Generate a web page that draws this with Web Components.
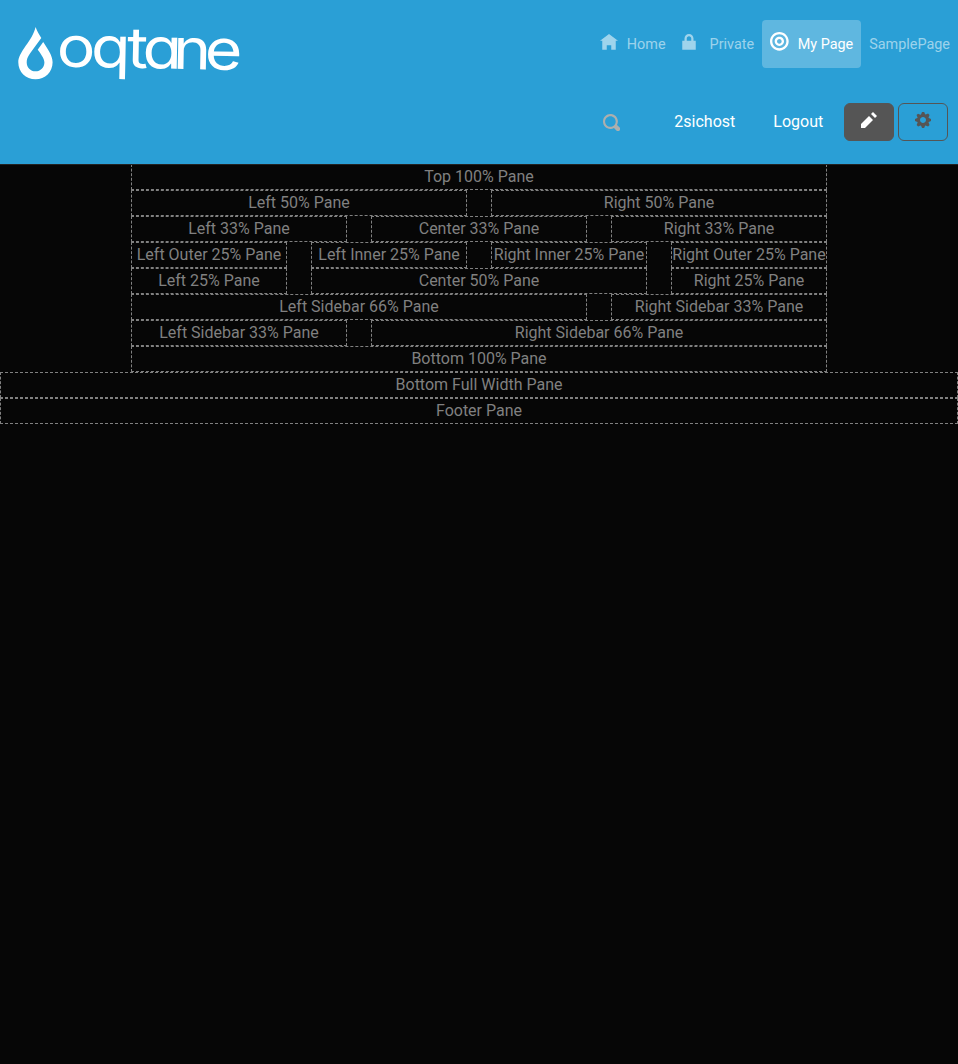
<!DOCTYPE html>
<html lang="en">
<head>
<meta charset="utf-8">
<title>My Page</title>
<style>
html{background:#060606}
body{margin:0;background:#060606;font-family:Roboto,sans-serif;font-size:16px;line-height:24px;color:#808080}
</style>
</head>
<body>
<oq-page></oq-page>
<script>
const define = (name, html, setup) => customElements.define(name, class extends HTMLElement {
  connectedCallback() {
    if (this.shadowRoot) return;
    const t = document.createElement('template');
    t.innerHTML = html;
    this.attachShadow({mode: 'open'}).append(t.content.cloneNode(true));
    if (setup) setup(this, this.shadowRoot);
  }
});

const icons = {
  home: 'M4 0l-4 3h1v4h2v-2h2v2h2v-4.03l1 .03-4-3z',
  lock: 'M4 0c-1.1 0-2 .9-2 2v1h-1v4h6v-4h-1v-1c0-1.1-.9-2-2-2zm0 1c.56 0 1 .44 1 1v1h-2v-1c0-.56.44-1 1-1z',
  target: 'M4 0c-2.2 0-4 1.8-4 4s1.8 4 4 4 4-1.8 4-4-1.8-4-4-4zm0 1c1.66 0 3 1.34 3 3s-1.34 3-3 3-3-1.34-3-3 1.34-3 3-3zm0 1c-1.1 0-2 .9-2 2s.9 2 2 2 2-.9 2-2-.9-2-2-2zm0 1c.56 0 1 .44 1 1s-.44 1-1 1-1-.44-1-1 .44-1 1-1z',
  pencil: 'M6 0l-1 1 2 2 1-1-2-2zm-2 2l-4 4v2h2l4-4-2-2z',
  cog: 'M3.5 0l-.5 1.19-.31.13-1.19-.5-.72.72.5 1.19-.13.28-1.15.49v1l1.19.5.13.31-.5 1.19.72.72 1.19-.5.31.13.5 1.19h1l.5-1.19.28-.13 1.22.5.72-.72-.5-1.19.13-.31 1.19-.5v-1l-1.19-.5-.13-.28.5-1.22-.72-.72-1.19.5-.28-.13-.5-1.19h-1zm.5 2.5c.83 0 1.5.67 1.5 1.5s-.67 1.5-1.5 1.5-1.5-.67-1.5-1.5.67-1.5 1.5-1.5z',
  search: 'M3.5 0c-1.93 0-3.5 1.57-3.5 3.5s1.57 3.5 3.5 3.5c.59 0 1.17-.14 1.66-.41a1 1 0 0 0 .13.13l1 1a1.02 1.02 0 1 0 1.44-1.44l-1-1a1 1 0 0 0-.16-.13c.27-.49.44-1.06.44-1.66 0-1.93-1.55-3.5-3.47-3.5zm0 1c1.39 0 2.47 1.11 2.47 2.5 0 .66-.24 1.27-.66 1.72-.01.01-.02.02-.03.03a1 1 0 0 0-.13.13c-.44.4-1.03.63-1.66.63-1.39 0-2.5-1.11-2.5-2.5s1.11-2.5 2.5-2.5z'
};

define('oq-icon', `<style>:host{display:block;width:var(--size,16px);height:var(--size,16px)}svg{display:block;width:100%;height:100%}</style>
<svg viewBox="0 0 8 8" fill="currentColor"><path/></svg>`,
  (el, root) => root.querySelector('path').setAttribute('d', icons[el.getAttribute('name')]));

define('oq-logo', `<style>:host{display:block;width:230px;height:60px}svg{display:block;overflow:visible}text{font-family:Inter,sans-serif;font-feature-settings:"cv11" 1;font-size:56.5px;fill:#fff}</style>
<svg width="230" height="60" viewBox="18 25 230 60">
<path fill="#fff" fill-rule="evenodd" d="M35.6 27C37.2 31.5 39.3 34.8 41.3 38L32.7 49.8C29.8 53.7 26.7 57.5 26.7 62.4C26.7 67.5 30.5 71.2 35.5 71.2C40.5 71.2 44.4 67.5 44.4 62.4C44.4 58.5 40.3 53 37.7 49.7L43.2 42C47 48 52.6 55 52.6 62.3C52.6 72 45.2 79.3 35.5 79.3C25.8 79.3 18.3 72 18.3 62.3C18.3 51.5 32.5 41 35.6 27Z"/>
<g transform="translate(60 66.5) rotate(1.1) scale(1.14 1)"><text x="-3 27 58.5 72.2 99 126.7" y="0">oqtane</text></g>
</svg>`);

define('oq-nav-item', `<style>
:host{display:flex;box-sizing:border-box;height:48px;padding:0 8px;border-radius:4px;color:rgba(255,255,255,.55);font-size:14.4px;line-height:49px;--size:18px}
:host([active]){background:rgba(255,255,255,.25);color:#fff}
::slotted(oq-icon){margin:14px 9px 0 0}
:host([active]) ::slotted(oq-icon){margin-top:12px}
</style><slot name="icon"></slot><slot></slot>`);

define('oq-button', `<style>
:host{display:flex;box-sizing:border-box;width:50px;height:38px;justify-content:center;padding-top:8px;border:1px solid #555;border-radius:6px;color:#555}
:host([solid]){background:#555;color:#fff}
</style><slot></slot>`);

define('oq-header', `<style>
:host{display:grid;grid-template-columns:1fr auto;grid-template-rows:48px 38px;row-gap:35px;box-sizing:border-box;height:165px;padding:20px 0 0 18px;margin-bottom:-1px;position:relative;background:#2a9fd6;border-bottom:1px solid #222}
oq-logo{margin-top:5px}
nav{display:flex;justify-content:flex-end}
.tools{grid-column:1/3;display:flex;justify-content:flex-end;padding-right:10px;color:#fff;line-height:37px}
.search{--size:17px;color:#adafae;margin:11px 54px 0 0}
.user{margin-right:38px}.out{margin-right:20.8px}
oq-button+oq-button{margin-left:4px}
</style>
<oq-logo></oq-logo>
<nav>
<oq-nav-item><oq-icon slot="icon" name="home"></oq-icon>Home</oq-nav-item>
<oq-nav-item style="padding-left:6px"><oq-icon slot="icon" name="lock" style="margin-right:12px"></oq-icon>Private</oq-nav-item>
<oq-nav-item active><oq-icon slot="icon" name="target" style="width:18.7px;height:18.7px"></oq-icon>My Page</oq-nav-item>
<oq-nav-item>SamplePage</oq-nav-item>
</nav>
<div class="tools"><oq-icon class="search" name="search"></oq-icon><span class="user">2sichost</span><span class="out">Logout</span>
<oq-button solid><oq-icon name="pencil"></oq-icon></oq-button><oq-button><oq-icon name="cog"></oq-icon></oq-button></div>`);

define('oq-pane', `<style>
:host{display:block;box-sizing:border-box;height:26px;min-width:0;border:1px dashed #808080;text-align:center;white-space:nowrap}
</style><slot></slot>`, el => { if (el.hasAttribute('span')) el.style.gridColumn = 'span ' + el.getAttribute('span'); });

define('oq-row', `<style>
:host{display:grid;grid-template-columns:repeat(12,minmax(0,1fr));column-gap:24px}
</style><slot></slot>`);

define('oq-page', `<style>
:host{display:block}
main{width:696px;margin:0 auto}
</style>
<oq-header></oq-header>
<main>
<oq-row><oq-pane span="12">Top 100% Pane</oq-pane></oq-row>
<oq-row><oq-pane span="6">Left 50% Pane</oq-pane><oq-pane span="6">Right 50% Pane</oq-pane></oq-row>
<oq-row><oq-pane span="4">Left 33% Pane</oq-pane><oq-pane span="4">Center 33% Pane</oq-pane><oq-pane span="4">Right 33% Pane</oq-pane></oq-row>
<oq-row><oq-pane span="3">Left Outer 25% Pane</oq-pane><oq-pane span="3">Left Inner 25% Pane</oq-pane><oq-pane span="3">Right Inner 25% Pane</oq-pane><oq-pane span="3">Right Outer 25% Pane</oq-pane></oq-row>
<oq-row><oq-pane span="3">Left 25% Pane</oq-pane><oq-pane span="6">Center 50% Pane</oq-pane><oq-pane span="3">Right 25% Pane</oq-pane></oq-row>
<oq-row><oq-pane span="8">Left Sidebar 66% Pane</oq-pane><oq-pane span="4">Right Sidebar 33% Pane</oq-pane></oq-row>
<oq-row><oq-pane span="4">Left Sidebar 33% Pane</oq-pane><oq-pane span="8">Right Sidebar 66% Pane</oq-pane></oq-row>
<oq-row><oq-pane span="12">Bottom 100% Pane</oq-pane></oq-row>
</main>
<oq-pane>Bottom Full Width Pane</oq-pane>
<oq-pane>Footer Pane</oq-pane>`);
</script>
</body>
</html>
